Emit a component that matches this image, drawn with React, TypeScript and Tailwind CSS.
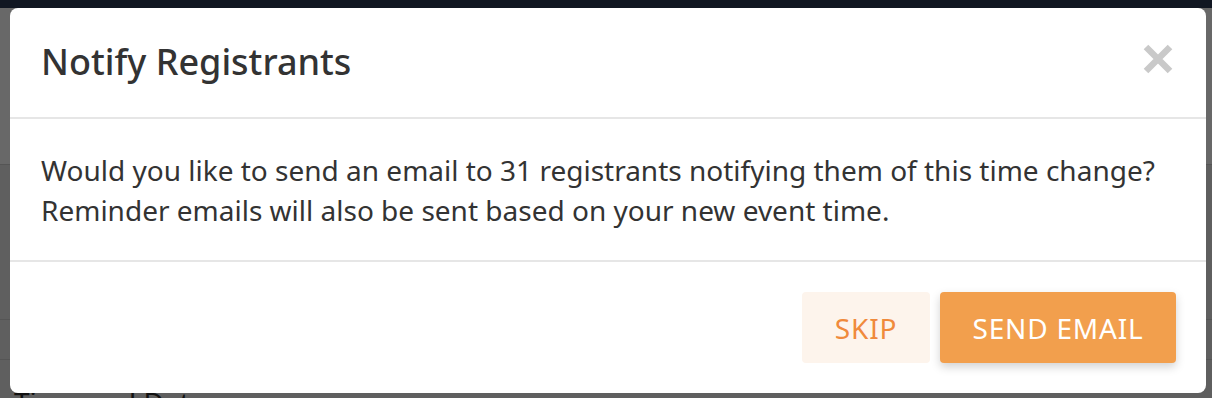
import React from "react";

export default function App() {
  return (
    <div
      className="relative w-[1212px] h-[398px] overflow-hidden bg-[#5f5f5f] flex flex-col"
      style={{ fontFamily: '"Noto Sans", "Open Sans", sans-serif' }}
    >
      {/* dimmed page behind the dialog */}
      <div className="h-[8px] shrink-0 bg-[#111722]" />
      <div className="h-[157px] shrink-0 bg-[#686868] border-b border-[#555]" />
      <div className="h-[155px] shrink-0 border-b border-[#555]" />
      <div className="h-[40px] shrink-0 border-b border-[#555]" />
      <div className="flex-1 pl-[14px] text-[28px] leading-[24px] text-[#111] pt-[30px]">Time and Date</div>

      {/* modal */}
      <div className="absolute left-[10px] top-[8px] w-[1196px] h-[385px] bg-white rounded-[8px] flex flex-col overflow-hidden">
        <div className="h-[111px] shrink-0 flex items-center justify-between pl-[31px] pr-[33px] border-b-2 border-[#e6e6e6]">
          <h2 className="text-[36px] font-medium text-[#333333] leading-none pb-[2px]">Notify Registrants</h2>
          <svg width="30" height="30" viewBox="0 0 30 30" className="mb-[8px]">
            <path d="M3 3 L27 27 M27 3 L3 27" stroke="#c9c9c9" strokeWidth="6.5" strokeLinecap="butt" />
          </svg>
        </div>
        <div className="h-[143px] shrink-0 pl-[31px] pt-[31px] border-b-2 border-[#e6e6e6] text-[28px] leading-[40px] text-[#333333]">
          <p>Would you like to send an email to 31 registrants notifying them of this time change?</p>
          <p>Reminder emails will also be sent based on your new event time.</p>
        </div>
        <div className="flex-1 flex justify-end items-start pt-[30px] pr-[30px] gap-[10px]">
          <button className="w-[128px] h-[71px] rounded-[4px] bg-[#fdf4ec] text-[#f08a3c] text-[28px] tracking-[0.8px] uppercase">
            Skip
          </button>
          <button className="w-[236px] h-[71px] rounded-[4px] bg-[#f29f4d] text-white text-[28px] tracking-[0.8px] uppercase shadow-[0_4px_10px_rgba(0,0,0,0.18)]">
            Send Email
          </button>
        </div>
      </div>
    </div>
  );
}
